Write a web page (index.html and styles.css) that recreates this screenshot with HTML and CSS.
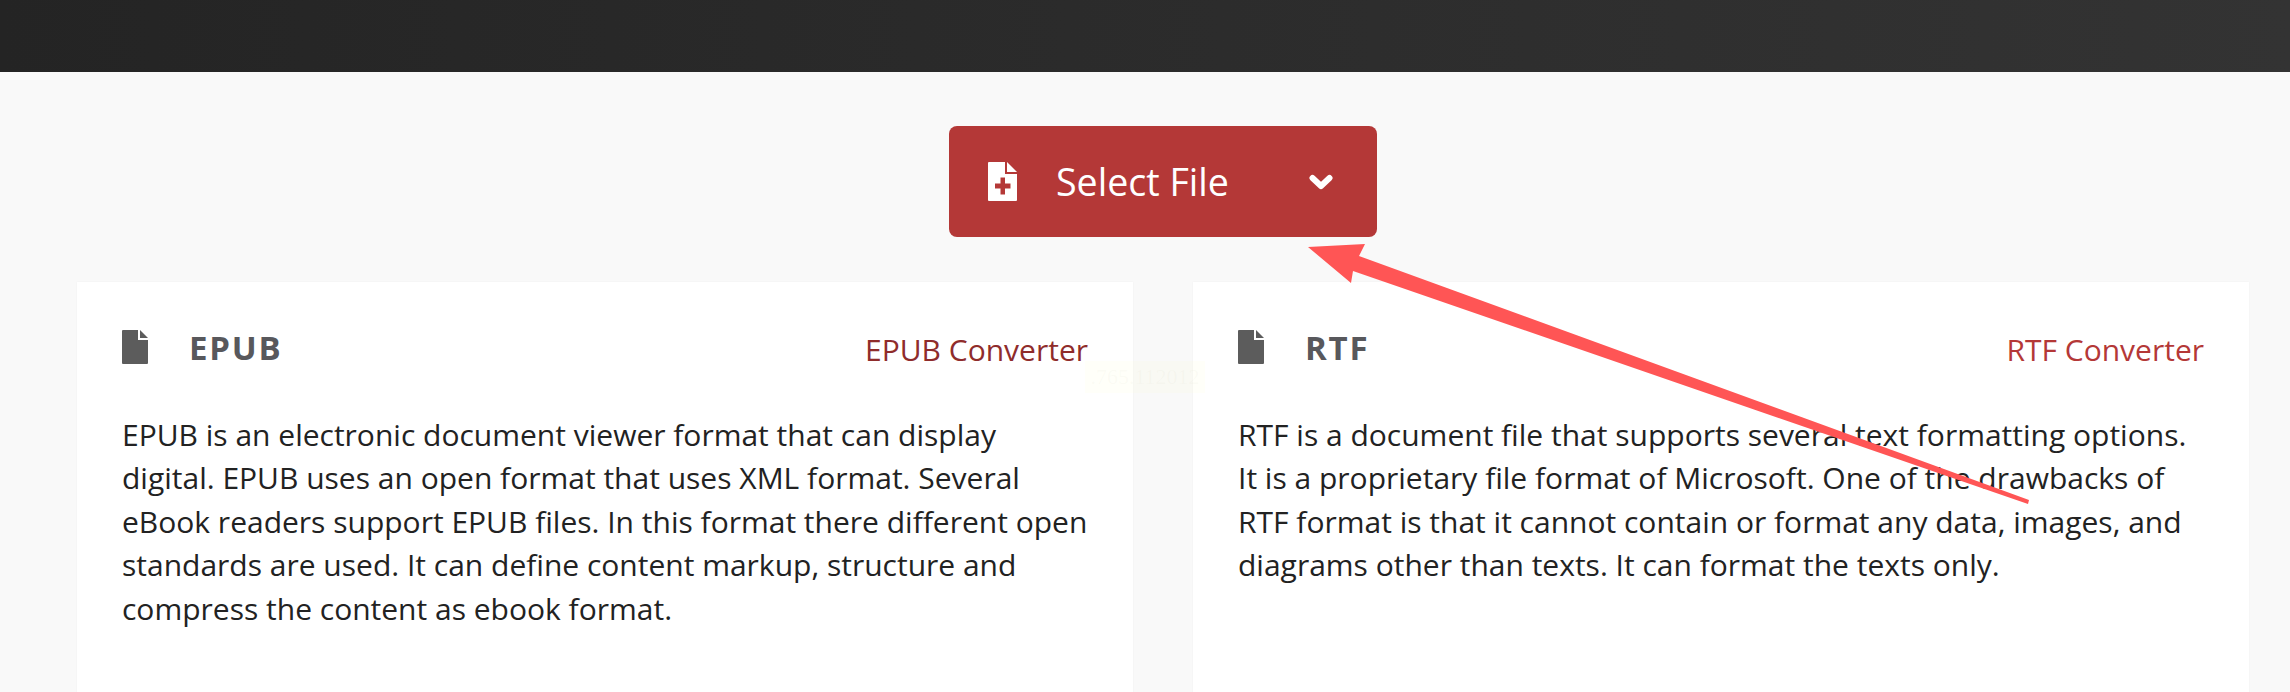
FILE: index.html
```html
<!DOCTYPE html>
<html lang="en">
<head>
<meta charset="utf-8">
<title>Select File</title>
<link rel="stylesheet" href="styles.css">
</head>
<body>
<header class="topbar"></header>
<main class="page">
  <div class="action">
    <button class="select-btn" type="button">
      <svg class="btn-file" viewBox="0 0 29 39" aria-hidden="true"><path fill-rule="evenodd" d="M1 0H17V12H29V38a1 1 0 0 1-1 1H1a1 1 0 0 1-1-1V1a1 1 0 0 1 1-1ZM12.500 15.500V21.500H7V26.500H12.500V32.500H17V26.500H22.500V21.500H17V15.500Z"/><path d="M19 0 29 10H19Z"/></svg>
      <span class="btn-label">Select File</span>
      <svg class="btn-chevron" viewBox="0 0 24 16" aria-hidden="true"><path d="M3.500 4 12 12 20.500 4" fill="none" stroke="#fff" stroke-width="6" stroke-linecap="round" stroke-linejoin="round"/></svg>
    </button>
  </div>
  <section class="cards">
    <article class="card">
      <div class="card-head">
        <svg class="head-file" viewBox="0 0 26 34" aria-hidden="true"><path d="M1 0H16V10H26V33a1 1 0 0 1-1 1H1a1 1 0 0 1-1-1V1a1 1 0 0 1 1-1Z"/><path d="M18 0 26 8H18Z"/></svg>
        <h2 class="card-title">EPUB</h2>
        <a class="card-link card-link-dark" href="#">EPUB Converter</a>
      </div>
      <p class="card-text">EPUB is an electronic document viewer format that can display digital. EPUB uses an open format that uses XML format. Several eBook readers support EPUB files. In this format there different open standards are used. It can define content markup, structure and compress the content as ebook format.</p>
    </article>
    <article class="card">
      <div class="card-head">
        <svg class="head-file" viewBox="0 0 26 34" aria-hidden="true"><path d="M1 0H16V10H26V33a1 1 0 0 1-1 1H1a1 1 0 0 1-1-1V1a1 1 0 0 1 1-1Z"/><path d="M18 0 26 8H18Z"/></svg>
        <h2 class="card-title">RTF</h2>
        <a class="card-link" href="#">RTF Converter</a>
      </div>
      <p class="card-text">RTF is a document file that supports several text formatting options. It is a proprietary file format of Microsoft. One of the drawbacks of RTF format is that it cannot contain or format any data, images, and diagrams other than texts. It can format the texts only.</p>
    </article>
  </section>
</main>
<div class="watermark">.765.112012</div>
<svg class="arrow" viewBox="0 0 2290 692" aria-hidden="true"><path d="M1308 247 1365 244 1359 256 2029 500 2028 504 1353 271 1351 283Z"/></svg>
</body>
</html>
```

FILE: styles.css
```css
* { box-sizing: border-box; }
html, body { margin: 0; height: 692px; overflow: hidden; }
body { background: #f9f9f9; font-family: "Open Sans", sans-serif; color: #222; position: relative; }
.topbar { height: 72px; background: linear-gradient(90deg, #242424 0%, #333 100%); }
.page { padding: 54px 41px 0 77px; }
.action { display: flex; justify-content: center; }
.select-btn { width: 428px; height: 111px; display: flex; align-items: center; padding: 0 44px 0 39px; border: 0; border-radius: 8px; background: #b43837; color: #fff; font: 400 37.600px "Open Sans", sans-serif; }
.btn-file { width: 29px; height: 39px; fill: #fff; flex: none; }
.btn-label { margin-left: 39px; flex: 1; text-align: left; }
.btn-chevron { width: 24px; height: 16px; flex: none; }
.cards { display: grid; grid-template-columns: 1056px 1056px; gap: 60px; margin-top: 45px; }
.card { height: 420px; padding: 48px 45px 0; background: #fff; box-shadow: 0 0 2px rgba(0,0,0,.04); }
.card-head { display: flex; align-items: center; height: 34px; }
.head-file { width: 26px; height: 34px; fill: #5c5c5c; flex: none; }
.card-title { margin: 0 0 0 41px; flex: 1; font-size: 33px; font-weight: 700; letter-spacing: 1.800px; color: #58585c; }
.card-link { position: relative; top: 2px; font-size: 30px; color: #b43837; text-decoration: none; }
.card-link-dark { color: #8f2c2b; }
.card-text { margin: 49px 0 0; font-size: 30px; line-height: 43.400px; color: #222; }
.watermark { position: absolute; left: 1085px; top: 361px; width: 120px; height: 32px; background: rgba(255,255,200,.1); color: rgba(200,200,170,.07); font: 22px/32px "Liberation Serif", serif; text-align: center; white-space: nowrap; }
.arrow { position: absolute; left: 0; top: 0; width: 2290px; height: 692px; fill: #ff5555; pointer-events: none; }
```
